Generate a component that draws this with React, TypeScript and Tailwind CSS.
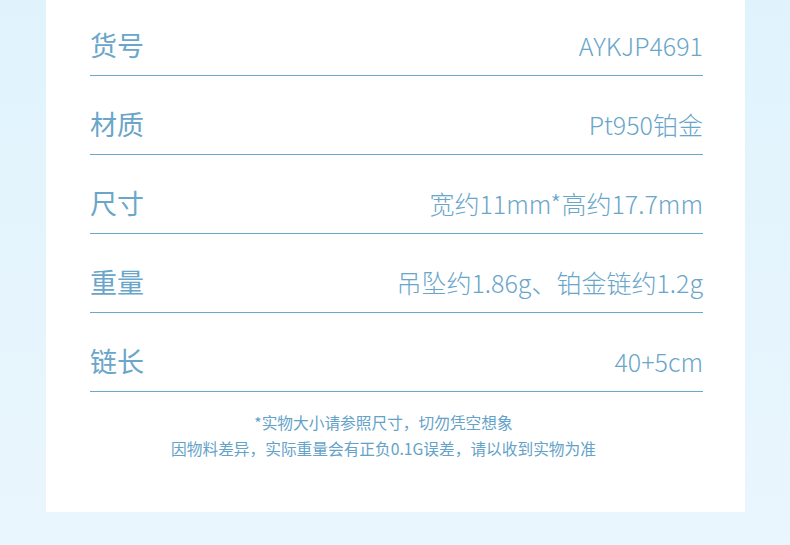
const specs = [
  { label: "货号", value: "AYKJP4691" },
  { label: "材质", value: "Pt950铂金" },
  { label: "尺寸", value: "宽约11mm*高约17.7mm" },
  { label: "重量", value: "吊坠约1.86g、铂金链约1.2g" },
  { label: "链长", value: "40+5cm" },
];

export default function App() {
  return (
    <div
      className="h-[545px] w-[790px] overflow-hidden bg-gradient-to-b from-[#e0f3fd] to-[#eaf6fd] px-[46px] text-[#6aa6c9]"
      style={{ fontFamily: '"Noto Sans CJK SC", "Noto Sans", sans-serif' }}
    >
      <div className="flex w-[699px] flex-col bg-white pb-[50px] pl-[44px] pr-[42px]">
        <div className="flex flex-col gap-[30px] pt-[27px]">
          {specs.map((s) => (
            <div
              key={s.label}
              className="flex items-center justify-between border-b border-[#6aa9ca] pb-3 leading-[36px]"
            >
              <span className="text-[27px]">{s.label}</span>
              <span className="text-[25px] font-light">{s.value}</span>
            </div>
          ))}
        </div>
        <div className="mr-[26px] mt-[18px] flex flex-col items-center text-[15.7px] leading-[26px] text-[#64a2c8]">
          <p>*实物大小请参照尺寸，切勿凭空想象</p>
          <p>因物料差异，实际重量会有正负0.1G误差，请以收到实物为准</p>
        </div>
      </div>
    </div>
  );
}
